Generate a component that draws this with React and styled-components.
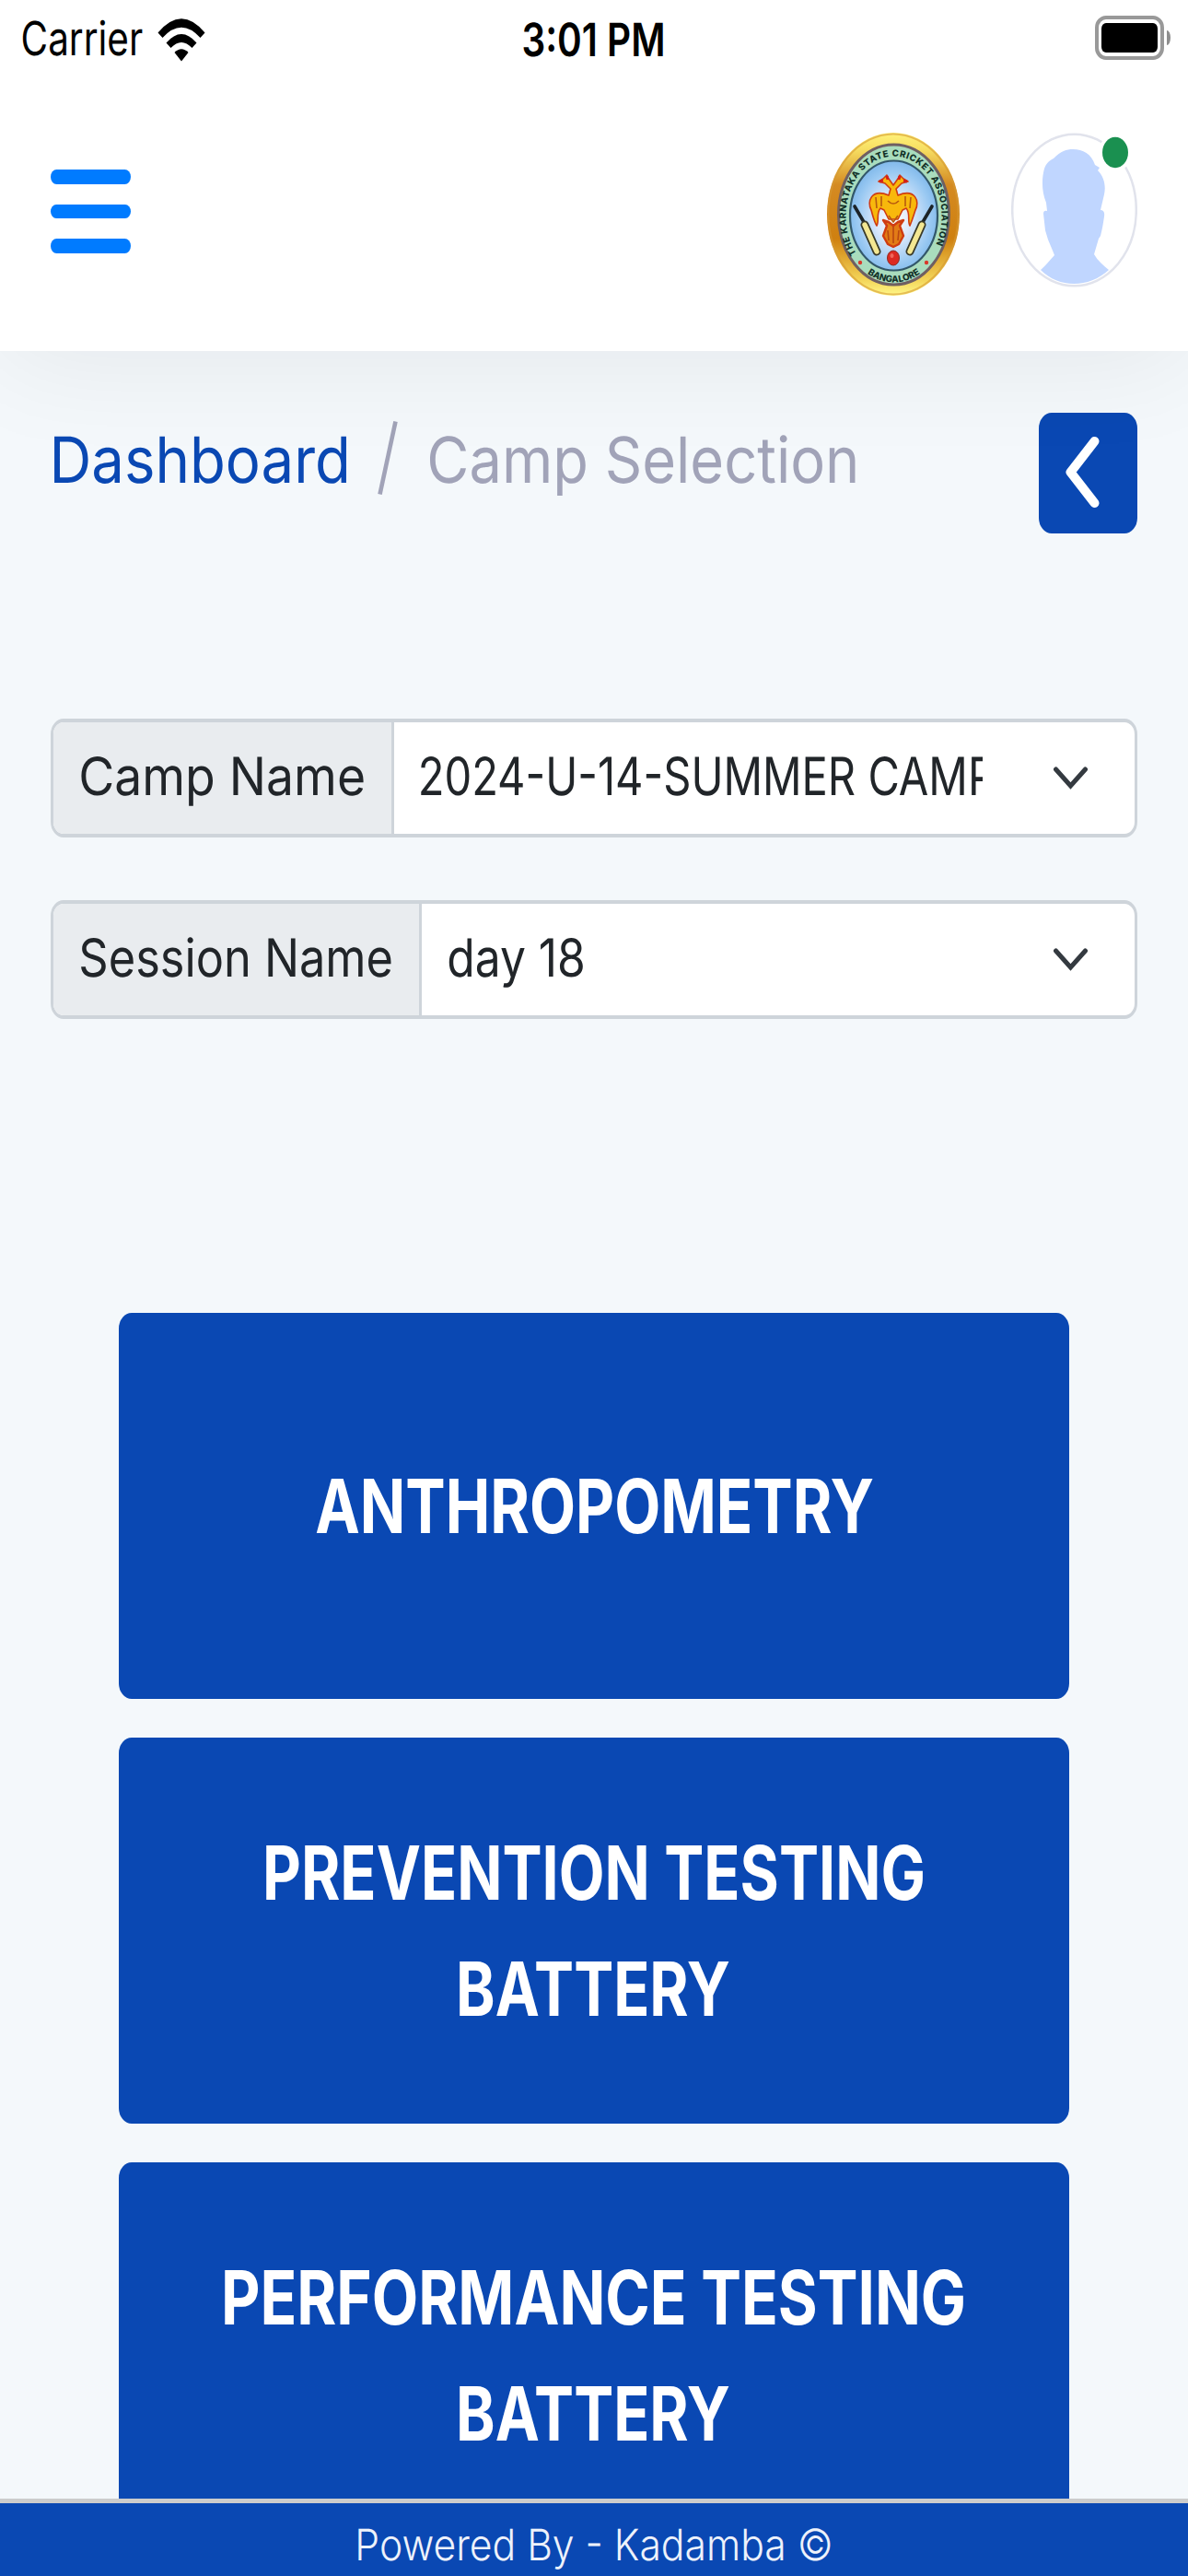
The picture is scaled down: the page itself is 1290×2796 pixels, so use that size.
import React, { useLayoutEffect, useRef, useState } from "react";
import styled, { createGlobalStyle } from "styled-components";

const GlobalStyle = createGlobalStyle`
  * { box-sizing: border-box; }
  body {
    margin: 0;
    font-family: Inter, "Liberation Sans", sans-serif;
    text-rendering: geometricPrecision;
  }
`;

const BLUE = "#0a48b3";

const Screen = styled.div`
  width: 1290px;
  height: 2796px;
  display: flex;
  flex-direction: column;
  overflow: hidden;
  background: #f4f8fb;
`;

/* ---------- text condensed to a given width ---------- */

const FitBox = styled.span`
  display: block;
  flex: none;
  width: ${(p) => p.$width}px;
  white-space: nowrap;
  font-size: ${(p) => p.$size}px;
  font-weight: ${(p) => p.$weight || 400};
`;

const FitInner = styled.span`
  display: inline-block;
  transform-origin: 0 50%;
`;

function FitText({ width, size, weight, children }) {
  const ref = useRef(null);
  const [transform, setTransform] = useState("none");
  useLayoutEffect(() => {
    const style = getComputedStyle(ref.current);
    const ctx = document.createElement("canvas").getContext("2d");
    ctx.font = `${style.fontWeight} ${style.fontSize} ${style.fontFamily}`;
    const m = ctx.measureText(children);
    const ratio = width / (m.actualBoundingBoxLeft + m.actualBoundingBoxRight);
    setTransform(`translateX(${m.actualBoundingBoxLeft * ratio}px) scaleX(${ratio})`);
  }, [width, size, weight, children]);
  return (
    <FitBox $width={width} $size={size} $weight={weight}>
      <FitInner ref={ref} style={{ transform }}>{children}</FitInner>
    </FitBox>
  );
}

/* ---------- header ---------- */

const Header = styled.header`
  position: relative;
  z-index: 1;
  flex: none;
  height: 381px;
  background: #fff;
  box-shadow: 0 8px 115px rgba(20, 0, 30, 0.07);
`;

const StatusBar = styled.div`
  display: grid;
  grid-template-columns: 1fr auto 1fr;
  align-items: center;
  height: 86px;
  padding: 0 19px 0 25px;
  color: #000;
  line-height: 64px;
`;

const Carrier = styled.div`
  display: flex;
  align-items: center;
  gap: 16px;
`;

const Clock = styled.div`
  padding: 1px 9px 0 0;
`;

const BatterySlot = styled.div`
  display: flex;
  justify-content: flex-end;
  align-items: center;
  gap: 3px;
  padding-bottom: 4px;
`;

const BatteryShell = styled.div`
  width: 75px;
  height: 48px;
  padding: 4px 3px;
  border: 4px solid #999;
  border-radius: 12px / 13px;
`;

const BatteryFill = styled.div`
  width: 100%;
  height: 100%;
  border-radius: 5px / 6px;
  background: #000;
`;

const BatteryNub = styled.div`
  width: 4px;
  height: 16px;
  border-radius: 0 4px 4px 0 / 0 8px 8px 0;
  background: #8e8e8e;
`;

const NavBar = styled.nav`
  display: flex;
  align-items: flex-start;
  padding: 58px 55px 0;
`;

const MenuButton = styled.button`
  display: flex;
  flex-direction: column;
  gap: 22px;
  width: 87px;
  margin: 40px auto 0 0;
  padding: 0;
  border: 0;
  background: none;
`;

const MenuBar = styled.span`
  height: 15.7px;
  border-radius: 6.500px / 8px;
  background: #007bff;
`;

const Emblem = styled.svg`
  width: 144px;
  height: 177px;
  margin-right: 56px;
`;

const Avatar = styled.svg`
  width: 137px;
  height: 168px;
`;

/* ---------- content ---------- */

const Main = styled.main`
  flex: 1;
  min-height: 0;
  overflow: hidden;
  padding: 67px 55px 0;
`;

const TitleRow = styled.div`
  display: flex;
  justify-content: space-between;
  align-items: flex-start;
  margin-bottom: 201px;
`;

const Breadcrumb = styled.div`
  display: flex;
  align-items: center;
  padding: 6px 0 0 4px;
  color: #a1a3b8;
  line-height: 90px;
  & svg { margin: 0 35px 5px 34px; }
`;

const Crumb = styled.span`
  color: ${(p) => (p.$active ? BLUE : "#a1a3b8")};
`;

const BackButton = styled.button`
  display: flex;
  align-items: center;
  justify-content: center;
  width: 107px;
  height: 131px;
  padding: 0 12px 2px 0;
  border: 0;
  border-radius: 14px / 17px;
  background: ${BLUE};
`;

const InputGroup = styled.div`
  display: flex;
  height: 129px;
  margin-bottom: 68px;
  overflow: hidden;
  border: solid #ced4da;
  border-width: 4px 3px;
  border-radius: 14px / 17px;
  background: #fff;
  color: #212529;
  line-height: 80px;
`;

const Label = styled.div`
  display: flex;
  align-items: center;
  flex: none;
  width: ${(p) => p.$width}px;
  padding: 0 0 3px 30px;
  border-right: 3px solid #ced4da;
  background: #e9ecef;
`;

const Select = styled.div`
  flex: 1;
  min-width: 0;
  display: flex;
  align-items: center;
  justify-content: space-between;
  padding: 0 51px 0 29px;
`;

const Value = styled.div`
  max-width: 610px;
  margin-bottom: 3px;
  overflow: ${(p) => (p.$clip ? "hidden" : "visible")};
`;

const Cards = styled.div`
  display: flex;
  flex-direction: column;
  gap: 42px;
  padding: 251px 74px 0;
`;

const Card = styled.button`
  display: flex;
  flex-direction: column;
  align-items: center;
  justify-content: center;
  height: 419px;
  flex: none;
  padding: 3px 0 0;
  border: 0;
  border-radius: 14px / 17px;
  background: ${BLUE};
  color: #fff;
  font-family: inherit;
  line-height: 125.6px;
`;

const Footer = styled.footer`
  flex: none;
  display: flex;
  justify-content: center;
  height: 84px;
  padding-top: 17px;
  border-top: 5px solid #ccc;
  background: ${BLUE};
  color: #eef2fb;
  line-height: 58px;
`;

/* ---------- drawings ---------- */

const WifiIcon = () => (
  <svg width="52" height="47" viewBox="0 0 52 47">
    <path d="M0.5 15.5 Q26 -15 51.5 15.5 L46.5 21 Q26 -1.500 5.500 21Z" />
    <path d="M9.500 26.500 Q26 7.500 42.500 26.500 L37.500 32 Q26 20 14.500 32Z" />
    <path d="M18.500 37 Q26 29.500 33.500 37 L26 46.500Z" />
  </svg>
);

const CricketEmblem = () => (
  <Emblem viewBox="0 0 144 177">
    <defs>
      <linearGradient id="gold" x1="0" y1="0" x2="0" y2="1">
        <stop offset="0" stopColor="#fff27a" />
        <stop offset="0.1" stopColor="#f7df62" />
        <stop offset="0.32" stopColor="#d48a22" />
        <stop offset="0.65" stopColor="#cf8010" />
        <stop offset="0.9" stopColor="#f3d457" />
        <stop offset="1" stopColor="#fff88a" />
      </linearGradient>
      <radialGradient id="sky" cx="0.5" cy="0.52" r="0.5">
        <stop offset="0" stopColor="#ffffff" />
        <stop offset="0.4" stopColor="#dce8fb" />
        <stop offset="0.85" stopColor="#98c8f2" />
        <stop offset="1" stopColor="#86bcec" />
      </radialGradient>
      <path id="arcTop" d="M33 133 A52 65 0 1 1 112 133" />
      <path id="arcBottom" d="M39 149 A58 73 0 0 0 106 149" />
    </defs>
    <ellipse cx="72" cy="88.500" rx="72" ry="88.500" fill="url(#gold)" />
    <ellipse cx="72" cy="88.500" rx="70.500" ry="87" fill="none" stroke="#d59a35" strokeWidth="2" opacity="0.6" />
    <ellipse cx="72.500" cy="89" rx="60" ry="76" fill="#a9dcbd" stroke="#6f5f62" strokeWidth="3" />
    <ellipse cx="72.500" cy="90" rx="47.500" ry="59.500" fill="url(#sky)" stroke="#32576a" strokeWidth="2.200" />
    <g fontFamily="Inter, sans-serif" fontWeight="800" fontSize="9.800" fill="#123128">
      <text><textPath href="#arcTop" startOffset="2" textLength="258" lengthAdjust="spacing">THE KARNATAKA STATE CRICKET ASSOCIATION</textPath></text>
      <text><textPath href="#arcBottom" startOffset="50%" textAnchor="middle">BANGALORE</textPath></text>
    </g>
    <circle cx="36" cy="141" r="2.200" fill="#d9382b" />
    <circle cx="108" cy="141" r="2.200" fill="#d9382b" />
    <g fill="none" strokeLinecap="round">
      <path d="M30 80 L40 97 M114 80 L104 97" stroke="#1c2328" strokeWidth="3.600" />
      <path d="M41 100 L54 129 M103 100 L90 129" stroke="#3a3a28" strokeWidth="9" />
      <path d="M41 100 L54 129 M103 100 L90 129" stroke="#f3e792" strokeWidth="5.500" />
    </g>
    <g stroke="#cf3c12" strokeWidth="1.600" strokeLinejoin="round">
      <path d="M67 68 C48 60 43 75 48 84 C50 91 51 96 54 101 C57 96 53 88 58 82 L62 84 L67 94 L77 94 L82 84 L86 82 C91 88 87 96 90 101 C93 94 94 90 96 84 C101 75 96 60 77 68 L75 61 L81 55 L88 53 L83 50 L79 46 L77 50 L72 57 L67 50 L65 46 L61 50 L56 53 L63 55 L69 61Z" fill="#f8b80c" />
      <path d="M53 70 L54 82 M59 69 L59 80 M85 69 L85 80 M91 70 L90 82 M66 74 Q72 80 78 74 M67 90 L72 97 L77 90" fill="none" stroke="#b75a10" />
      <path d="M67 97 L61 95 L65 101 L61 112 L66 121 L72 124 L78 121 L83 112 L79 101 L83 95 L77 97 L72 101Z" fill="#e27b16" strokeWidth="2.400" />
      <path d="M72 102 V120 M66 106 L67 117 M78 106 L77 117" fill="none" stroke="#b94712" />
      <path d="M57 53 l4 -1 M83 52 l4 1 M65 47 l1 4 M79 47 l-1 4" stroke="#d51f1b" strokeWidth="3" />
    </g>
    <ellipse cx="72" cy="136" rx="6.500" ry="8" fill="#dc2a22" stroke="#8e2c23" />
    <ellipse cx="70.500" cy="133.500" rx="2" ry="2.500" fill="#f0675a" />
  </Emblem>
);

const UserAvatar = () => (
  <Avatar viewBox="0 0 137 168">
    <ellipse cx="68.500" cy="84" rx="67.300" ry="82.300" fill="#fff" stroke="#e1e3ec" strokeWidth="2.500" />
    <path
      fill="#c0d6ff"
      d="M46 28 C54 20 60 18 67 18 C78 18 87 23 91 35 L96 38 L94 41 C101 48 103 58 101 67 L97 84 Q102 84 101 91 C100 98 99 104 97 112 L95 115 L90 132 C94 139 100 144 106 149 C84 169 52 169 32 149 C38 144 42 138 47 133 L45 128 L40 116 L37 106 L35 88 Q35 84 39 85 L38 76 C33 64 33 50 36 39 C38 33 42 30 46 28Z"
    />
    <ellipse cx="113" cy="21.500" rx="17.500" ry="21" fill="#fff" />
    <ellipse cx="113" cy="21.500" rx="14" ry="16.700" fill="#1a9050" />
  </Avatar>
);

const SelectChevron = () => (
  <svg width="37" height="26" viewBox="0 0 37 26">
    <path d="M2.500 3 L18.500 21 L34.500 3" fill="none" stroke="#343a40" strokeWidth="5" strokeLinecap="round" />
  </svg>
);

/* ---------- page ---------- */

const fields = [
  { label: "Camp Name", labelWidth: 307, boxWidth: 370, value: "2024-U-14-SUMMER CAMP", valueWidth: 622, clip: true },
  { label: "Session Name", labelWidth: 337, boxWidth: 400, value: "day 18", valueWidth: 146 },
];

const cards = [
  [["ANTHROPOMETRY", 605]],
  [["PREVENTION TESTING", 713], ["BATTERY", 293]],
  [["PERFORMANCE TESTING", 802], ["BATTERY", 293]],
];

export default function App() {
  return (
    <Screen>
      <GlobalStyle />
      <Header>
        <StatusBar>
          <Carrier>
            <FitText width={130} size={51}>Carrier</FitText>
            <WifiIcon />
          </Carrier>
          <Clock><FitText width={152} size={50} weight={600}>3:01 PM</FitText></Clock>
          <BatterySlot>
            <BatteryShell><BatteryFill /></BatteryShell>
            <BatteryNub />
          </BatterySlot>
        </StatusBar>
        <NavBar>
          <MenuButton aria-label="Menu">
            <MenuBar /><MenuBar /><MenuBar />
          </MenuButton>
          <CricketEmblem />
          <UserAvatar />
        </NavBar>
      </Header>
      <Main>
        <TitleRow>
          <Breadcrumb>
            <Crumb $active><FitText width={317} size={69}>Dashboard</FitText></Crumb>
            <svg width="22" height="80" viewBox="0 0 22 80">
              <path d="M2.500 79.500 L19.500 0.500" stroke="#a1a3b8" strokeWidth="4.600" />
            </svg>
            <Crumb><FitText width={462} size={69}>Camp Selection</FitText></Crumb>
          </Breadcrumb>
          <BackButton aria-label="Back">
            <svg width="37" height="79" viewBox="0 0 37 79">
              <path d="M31.500 6 L5.500 39.500 L31.500 73" fill="none" stroke="#fff" strokeWidth="10" strokeLinecap="round" strokeLinejoin="round" />
            </svg>
          </BackButton>
        </TitleRow>
        {fields.map((f) => (
          <InputGroup key={f.label}>
            <Label $width={f.boxWidth}>
              <FitText width={f.labelWidth} size={57}>{f.label}</FitText>
            </Label>
            <Select>
              <Value $clip={f.clip}><FitText width={f.valueWidth} size={57}>{f.value}</FitText></Value>
              <SelectChevron />
            </Select>
          </InputGroup>
        ))}
        <Cards>
          {cards.map((lines) => (
            <Card key={lines[0][0]}>
              {lines.map(([text, width]) => (
                <FitText key={text} width={width} size={81} weight={700}>{text}</FitText>
              ))}
            </Card>
          ))}
        </Cards>
      </Main>
      <Footer>
        <FitText width={513} size={47} weight={300}>Powered By - Kadamba ©</FitText>
      </Footer>
    </Screen>
  );
}
